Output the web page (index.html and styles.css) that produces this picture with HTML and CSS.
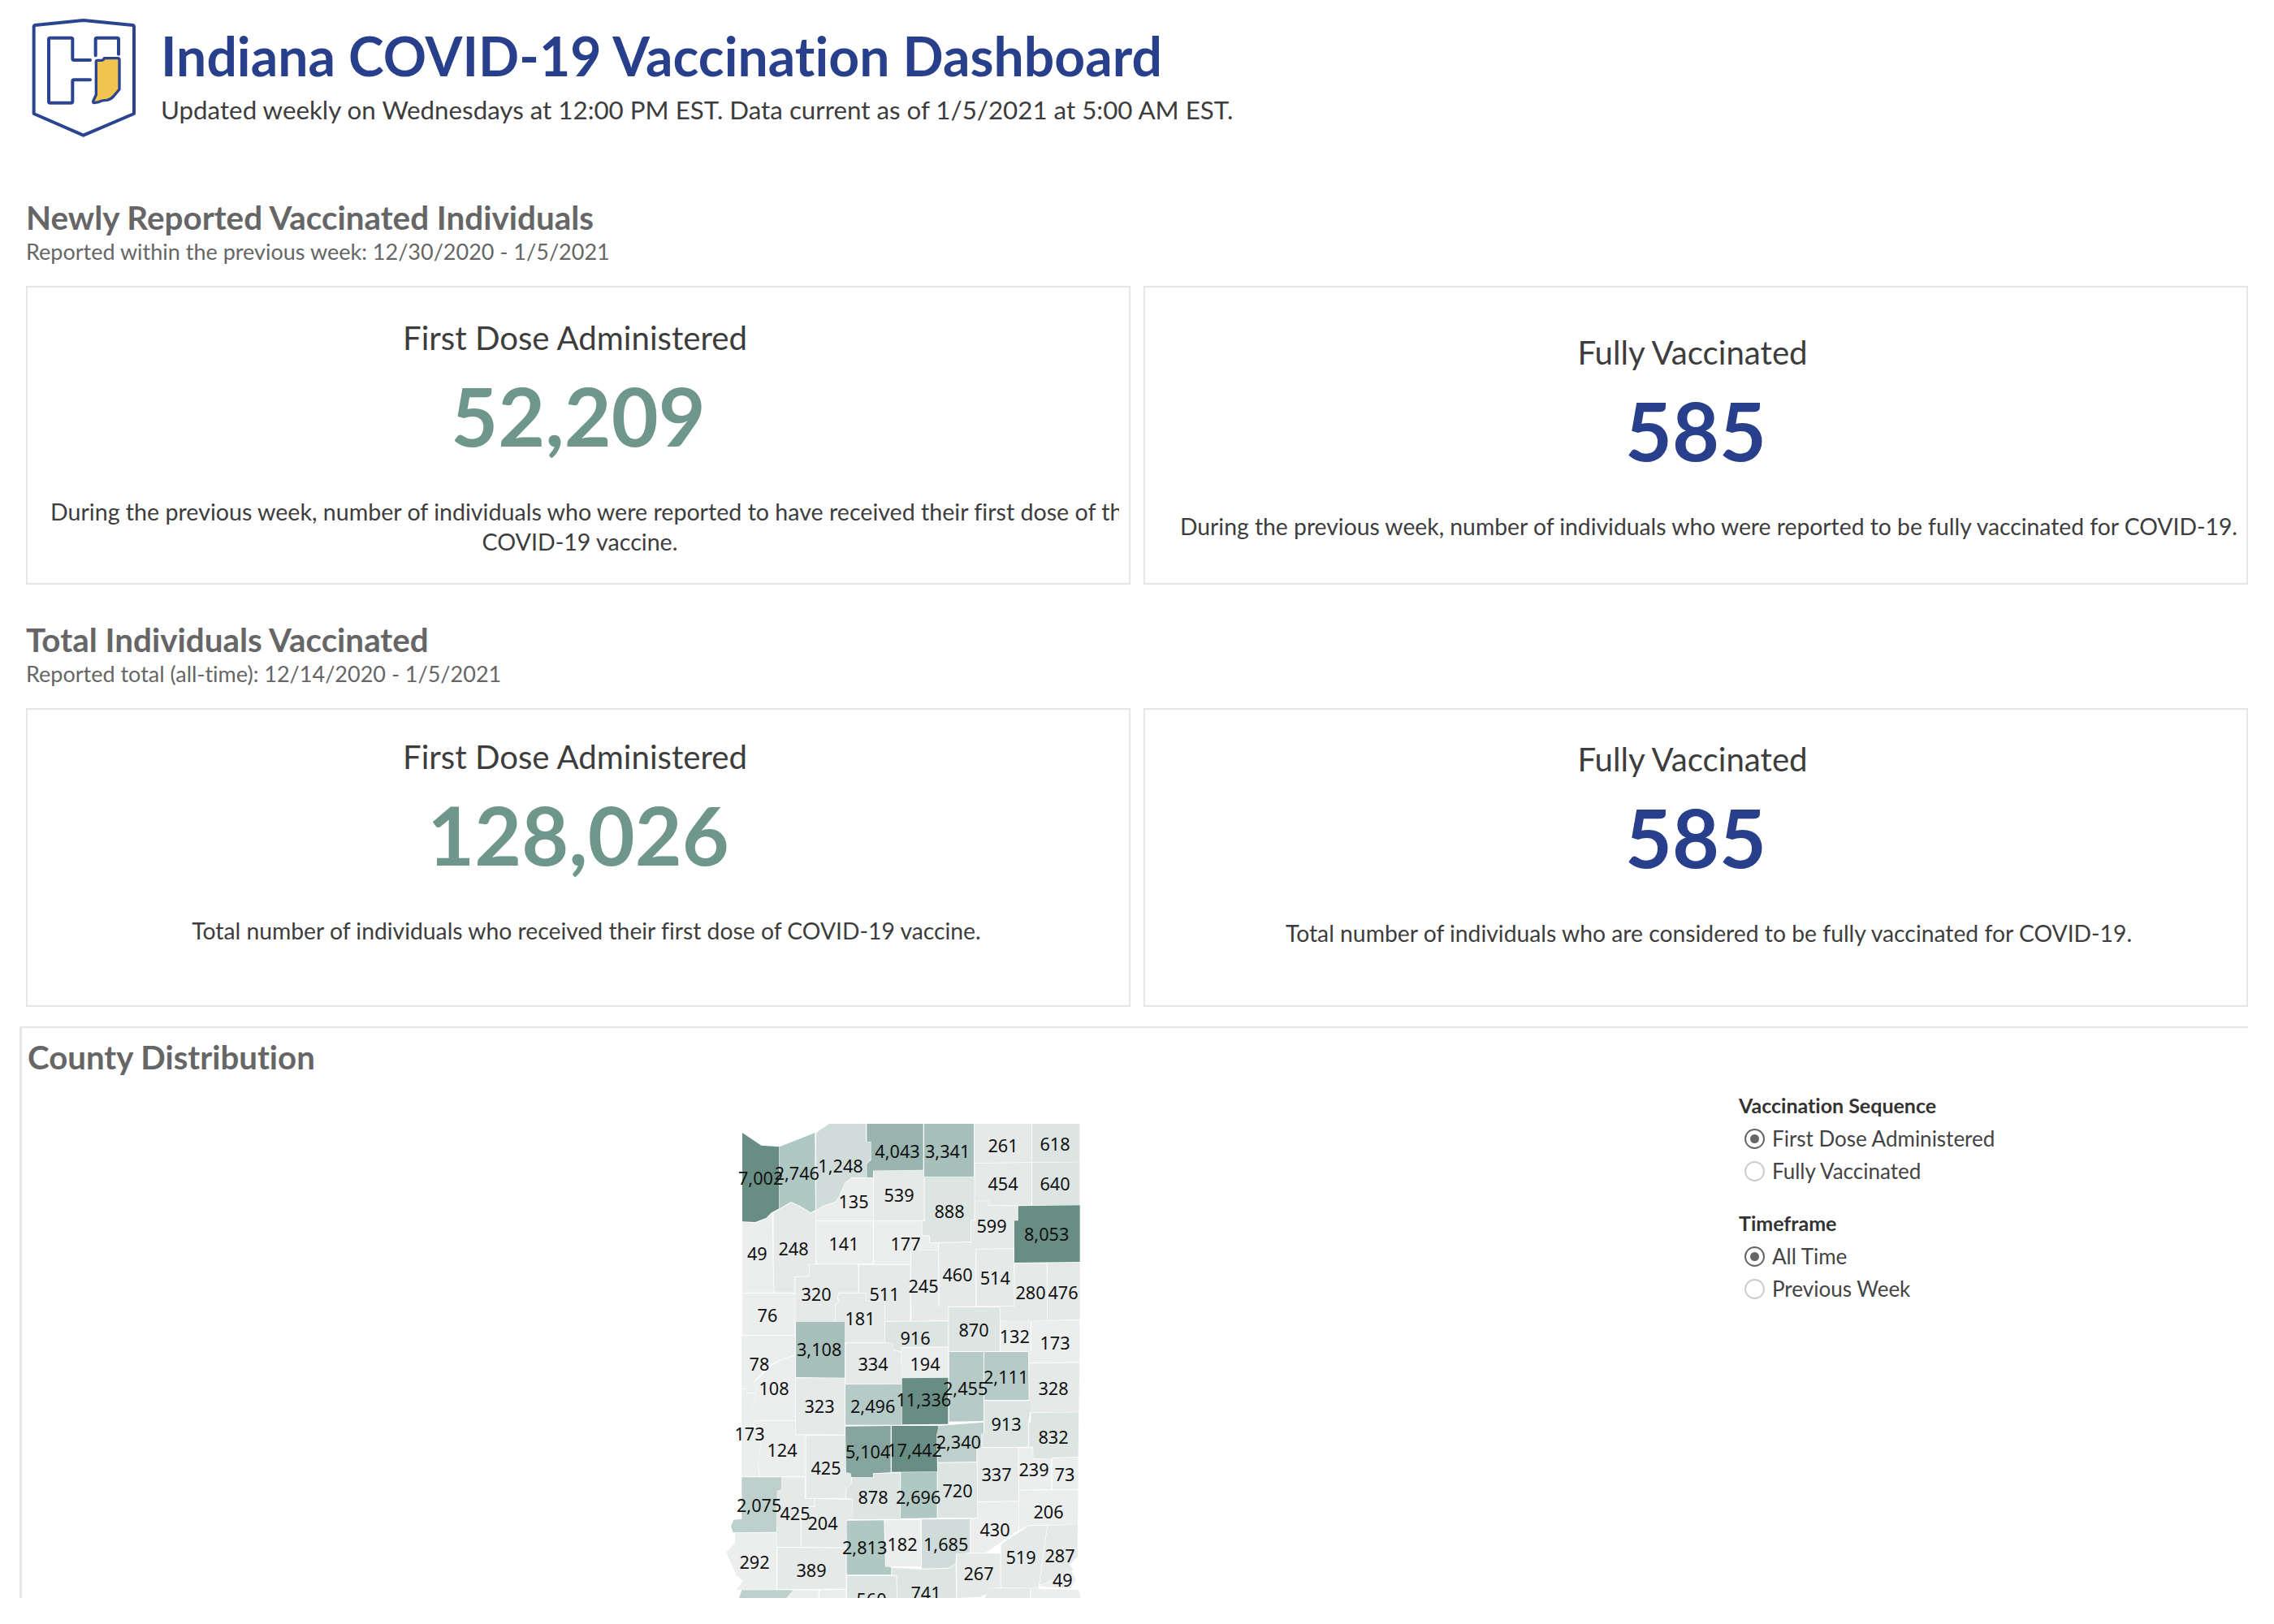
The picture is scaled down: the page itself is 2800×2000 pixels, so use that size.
FILE: index.html
```html
<!DOCTYPE html>
<html lang="en">
<head>
<meta charset="utf-8">
<title>Indiana COVID-19 Vaccination Dashboard</title>
<link rel="stylesheet" href="styles.css">
</head>
<body>
<header class="page-header">
  <svg class="logo" viewBox="0 0 450 480" aria-hidden="true">
    <path class="logo-line" d="M40 48 218 30 400 48Q405 49 405 55V375L218 455 35 375V55Q35 49 40 48Z"/>
    <path class="logo-line" d="M243 177H183Q178 177 178 172V100Q178 95 172 95H95Q90 95 90 100V330Q90 335 95 335H172Q178 335 178 330V255Q178 250 183 250H243"/>
    <path class="logo-line" d="M263 160V100Q263 95 268 95H343Q348 95 348 100V155"/>
    <path class="logo-state" d="M265 182Q265 178 270 178H285Q292 178 295 170H345Q351 170 351 176V285L330 310Q320 322 305 325Q285 325 275 332L258 335Q252 335 255 326L265 305Z"/>
  </svg>
  <div class="header-text">
    <h1 class="title">Indiana COVID-19 Vaccination Dashboard</h1>
    <p class="updated">Updated weekly on Wednesdays at 12:00 PM EST. Data current as of 1/5/2021 at 5:00 AM EST.</p>
  </div>
</header>

<section class="kpi-section first">
  <h2 class="section-title">Newly Reported Vaccinated Individuals</h2>
  <p class="section-sub">Reported within the previous week: 12/30/2020 - 1/5/2021</p>
  <div class="cards">
    <article class="card">
      <h3 class="card-title">First Dose Administered</h3>
      <div class="num green">52,209</div>
      <div class="desc desc-clip">During the previous week, number of individuals who were reported to have received their first dose of the<br>COVID-19 vaccine.</div>
    </article>
    <article class="card">
      <h3 class="card-title">Fully Vaccinated</h3>
      <div class="num blue">585</div>
      <div class="desc desc-right">During the previous week, number of individuals who were reported to be fully vaccinated for COVID-19.</div>
    </article>
  </div>
</section>

<section class="kpi-section second">
  <h2 class="section-title">Total Individuals Vaccinated</h2>
  <p class="section-sub">Reported total (all-time): 12/14/2020 - 1/5/2021</p>
  <div class="cards">
    <article class="card raised">
      <h3 class="card-title">First Dose Administered</h3>
      <div class="num green">128,026</div>
      <div class="desc desc-shift">Total number of individuals who received their first dose of COVID-19 vaccine.</div>
    </article>
    <article class="card raised-less">
      <h3 class="card-title">Fully Vaccinated</h3>
      <div class="num blue">585</div>
      <div class="desc desc-right">Total number of individuals who are considered to be fully vaccinated for COVID-19.</div>
    </article>
  </div>
</section>

<section class="county">
  <h2 class="county-title">County Distribution</h2>
  <div class="county-body">
    <svg class="map" viewBox="0 0 1560 1824" aria-label="Indiana county map">
      <g class="counties">
        <polygon class="s1" points="162,105 232,152 298,157 298,385 270,400 250,420 210,435 162,433"/>
        <polygon class="s5" points="300,157 430,105 432,390 415,400 375,375 342,360 300,385"/>
        <polygon class="s8" points="435,105 483,72 618,72 618,138 637,140 637,200 620,220 620,270 565,270 540,290 520,340 505,360 460,375 435,390"/>
        <polygon class="s3" points="622,72 830,72 830,242 645,245 645,270 622,270 622,220 638,205 638,138 622,138"/>
        <polygon class="s4" points="834,72 1017,72 1017,268 834,268"/>
        <polygon class="s10" points="1020,72 1230,72 1230,214 1020,216"/>
        <polygon class="s9" points="1233,72 1408,72 1408,212 1233,214"/>
        <polygon class="s10" points="1021,218 1230,216 1230,373 1074,373 1074,356 1021,356"/>
        <polygon class="s9" points="1233,216 1408,214 1408,372 1233,373"/>
        <polygon class="s11" points="435,393 460,378 505,362 522,342 540,293 565,272 645,272 645,430 435,430"/>
        <polygon class="s10" points="648,245 833,243 833,430 648,430"/>
        <polygon class="s9" points="836,270 1019,270 1019,425 1005,428 1005,507 855,510 855,485 827,483 827,432 836,432"/>
        <polygon class="s10" points="1022,358 1072,358 1072,375 1178,376 1178,428 1166,428 1166,532 1007,534 1007,430 1022,428"/>
        <polygon class="s1" points="1181,376 1409,373 1409,582 1167,585 1167,430 1181,430"/>
        <polygon class="s11" points="162,436 210,438 250,424 272,405 275,590 278,695 162,695"/>
        <polygon class="s10" points="278,400 300,388 342,363 375,378 415,403 432,395 432,590 408,590 408,634 355,636 355,695 280,695 278,590"/>
        <polygon class="s11" points="435,433 645,433 645,589 435,589"/>
        <polygon class="s11" points="648,433 825,433 825,486 853,488 853,512 885,512 885,537 810,539 783,540 783,590 648,590"/>
        <polygon class="s10" points="410,592 590,592 590,695 518,695 512,715 518,730 505,740 505,802 358,802 358,638 410,636"/>
        <polygon class="s10" points="594,593 782,593 782,800 690,800 690,725 620,725 620,697 594,695"/>
        <polygon class="s10" points="785,541 885,539 887,748 922,748 922,798 787,800"/>
        <polygon class="s10" points="888,512 1003,510 1024,536 1024,746 890,747"/>
        <polygon class="s10" points="1027,536 1164,535 1166,745 1028,746"/>
        <polygon class="s10" points="1168,588 1286,587 1288,797 1228,800 1115,800 1115,748 1168,747"/>
        <polygon class="s10" points="1289,586 1409,584 1409,795 1290,797"/>
        <polygon class="s11" points="162,698 356,698 356,852 162,852"/>
        <polygon class="s10" points="520,698 618,698 618,727 688,727 688,880 540,880 540,802 507,802 507,742 520,730 515,715"/>
        <polygon class="s9" points="925,750 1113,750 1113,912 925,912"/>
        <polygon class="s9" points="690,803 922,802 922,895 750,897 748,913 720,905 718,882 690,880"/>
        <polygon class="s11" points="1116,802 1227,800 1227,912 1116,912"/>
        <polygon class="s11" points="1230,800 1408,797 1408,952 1221,955 1221,913 1230,912"/>
        <polygon class="s11" points="160,855 357,855 357,925 300,945 270,960 210,1020 200,1030 215,1050 210,1065 175,1065 175,1050 160,1050"/>
        <polygon class="s11" points="357,928 357,1168 207,1168 200,1125 212,1065 217,1050 202,1030 212,1022 272,963 300,948"/>
        <polygon class="s4" points="360,803 540,803 540,1010 360,1008"/>
        <polygon class="s10" points="543,883 718,883 720,908 748,916 750,1032 543,1033"/>
        <polygon class="s11" points="750,900 922,898 922,1009 750,1012"/>
        <polygon class="s6" points="926,915 1053,915 1053,1170 926,1172"/>
        <polygon class="s6" points="1056,915 1218,915 1220,1092 1056,1092"/>
        <polygon class="s10" points="1222,958 1408,955 1405,1136 1222,1138"/>
        <polygon class="s1" points="752,1012 922,1010 922,1181 752,1183"/>
        <polygon class="s6" points="543,1035 750,1034 750,1184 543,1184"/>
        <polygon class="s10" points="360,1012 540,1012 540,1220 360,1219"/>
        <polygon class="s9" points="1056,1096 1225,1096 1225,1138 1218,1175 1218,1265 1048,1267 1048,1218 1056,1215"/>
        <polygon class="s9" points="1228,1140 1405,1138 1403,1302 1305,1305 1305,1310 1237,1308 1237,1265 1221,1265 1221,1175 1228,1175"/>
        <polygon class="s11" points="160,1052 175,1052 175,1067 210,1067 200,1125 207,1170 200,1185 230,1230 225,1305 220,1345 225,1375 160,1375"/>
        <polygon class="s11" points="207,1170 358,1170 358,1222 395,1222 395,1375 228,1375 222,1345 232,1230 205,1185"/>
        <polygon class="s10" points="398,1225 543,1223 545,1360 565,1363 563,1400 545,1425 543,1455 398,1455"/>
        <polygon class="s2" points="543,1190 710,1188 710,1360 645,1363 645,1378 565,1378 563,1363 546,1360"/>
        <polygon class="s1" points="714,1188 887,1188 880,1222 882,1357 714,1358"/>
        <polygon class="s7" points="888,1188 1053,1175 1053,1215 1045,1218 1045,1270 1027,1272 1027,1320 885,1322 880,1222"/>
        <polygon class="s10" points="1030,1270 1180,1268 1182,1465 1032,1467"/>
        <polygon class="s11" points="1183,1270 1235,1270 1235,1310 1303,1312 1303,1422 1184,1424"/>
        <polygon class="s11" points="1307,1307 1403,1304 1403,1423 1307,1423"/>
        <polygon class="s9" points="884,1325 1028,1323 1030,1528 884,1528"/>
        <polygon class="s5" points="748,1360 881,1358 881,1528 747,1530"/>
        <polygon class="s9" points="648,1365 745,1362 745,1532 570,1533 570,1457 546,1455 547,1425 565,1400 568,1380 648,1380"/>
        <polygon class="s10" points="310,1378 393,1378 393,1457 427,1457 427,1485 377,1490 377,1635 290,1635 290,1425 308,1425"/>
        <polygon class="s10" points="430,1458 568,1460 570,1532 547,1535 546,1637 380,1635 380,1490 430,1487"/>
        <polygon class="s7" points="160,1378 307,1378 307,1423 290,1427 288,1580 128,1582 120,1560 130,1535 160,1532"/>
        <polygon class="s11" points="135,1585 288,1583 288,1793 140,1793 165,1760 140,1740 103,1655 135,1620"/>
        <polygon class="s10" points="292,1638 545,1640 545,1790 292,1792"/>
        <polygon class="s5" points="548,1538 685,1537 690,1708 712,1710 712,1738 548,1738"/>
        <polygon class="s11" points="688,1537 820,1535 822,1707 692,1708"/>
        <polygon class="s8" points="824,1534 1003,1532 1003,1657 952,1660 950,1695 925,1712 825,1715"/>
        <polygon class="s11" points="1032,1470 1182,1468 1182,1575 1060,1657 1006,1657 1006,1532 1032,1530"/>
        <polygon class="s11" points="1185,1427 1403,1425 1401,1553 1220,1555 1185,1575"/>
        <polygon class="s10" points="1118,1625 1220,1558 1288,1556 1258,1770 1255,1786 1118,1786"/>
        <polygon class="s10" points="955,1660 1115,1660 1115,1785 1072,1787 1072,1805 1040,1820 955,1824"/>
        <polygon class="s10" points="1290,1556 1401,1554 1400,1672 1370,1700 1385,1720 1340,1745 1300,1755 1285,1770 1260,1773"/>
        <polygon class="s11" points="1262,1775 1290,1770 1305,1750 1340,1750 1375,1720 1395,1755 1375,1790 1260,1780"/>
        <polygon class="s9" points="715,1712 822,1718 925,1715 950,1698 952,1824 735,1824 733,1740 715,1738"/>
        <polygon class="s9" points="549,1742 730,1742 733,1824 549,1824"/>
        <polygon class="s7" points="160,1795 350,1795 325,1824 150,1824"/>
        <polygon class="s11" points="350,1795 443,1795 443,1824 327,1824"/>
        <polygon class="s11" points="447,1795 545,1793 545,1824 447,1824"/>
        <polygon class="s10" points="1058,1824 1075,1788 1225,1787 1225,1824"/>
        <polygon class="s11" points="1228,1780 1255,1778 1258,1790 1340,1792 1405,1795 1412,1824 1228,1824"/>
      </g>
      <g class="labels">
        <text x="230" y="292">7,002</text><text x="364" y="274">2,746</text><text x="525" y="248">1,248</text><text x="735" y="195">4,043</text><text x="920" y="195">3,341</text><text x="1125" y="172">261</text><text x="1317" y="166">618</text><text x="1125" y="314">454</text><text x="1317" y="314">640</text>
        <text x="573" y="381">135</text><text x="741" y="357">539</text><text x="927" y="417">888</text><text x="1083" y="471">599</text><text x="1286" y="501">8,053</text>
        <text x="217" y="573">49</text><text x="351" y="555">248</text><text x="537" y="537">141</text><text x="765" y="537">177</text><text x="957" y="651">460</text><text x="1096" y="663">514</text><text x="831" y="693">245</text><text x="435" y="723">320</text><text x="687" y="723">511</text><text x="1227" y="717">280</text><text x="1347" y="717">476</text>
        <text x="255" y="801">76</text><text x="597" y="813">181</text><text x="1017" y="855">870</text><text x="801" y="885">916</text><text x="1168" y="879">132</text><text x="1317" y="903">173</text><text x="446" y="927">3,108</text><text x="645" y="981">334</text><text x="837" y="981">194</text><text x="225" y="981">78</text>
        <text x="1136" y="1029">2,111</text><text x="279" y="1071">108</text><text x="986" y="1071">2,455</text><text x="1311" y="1071">328</text><text x="832" y="1113">11,336</text><text x="447" y="1137">323</text><text x="644" y="1137">2,496</text><text x="1137" y="1203">913</text>
        <text x="189" y="1239">173</text><text x="961" y="1269">2,340</text><text x="1311" y="1251">832</text><text x="309" y="1299">124</text><text x="626" y="1305">5,104</text><text x="798" y="1299">17,442</text><text x="471" y="1365">425</text><text x="1101" y="1389">337</text><text x="1239" y="1371">239</text><text x="1353" y="1389">73</text>
        <text x="957" y="1449">720</text><text x="645" y="1473">878</text><text x="812" y="1473">2,696</text><text x="224" y="1503">2,075</text><text x="357" y="1533">425</text><text x="459" y="1567">204</text><text x="1293" y="1527">206</text><text x="1095" y="1593">430</text>
        <text x="614" y="1659">2,813</text><text x="753" y="1647">182</text><text x="914" y="1647">1,685</text><text x="1191" y="1695">519</text><text x="1335" y="1689">287</text><text x="207" y="1713">292</text><text x="417" y="1743">389</text><text x="1035" y="1755">267</text><text x="1345" y="1779">49</text><text x="840" y="1827">741</text><text x="639" y="1851">560</text>
      </g>
    </svg>
    <aside class="filters">
      <fieldset class="filter">
        <legend class="filter-name">Vaccination Sequence</legend>
        <div class="option"><span class="radio on"></span>First Dose Administered</div>
        <div class="option"><span class="radio"></span>Fully Vaccinated</div>
      </fieldset>
      <fieldset class="filter">
        <legend class="filter-name">Timeframe</legend>
        <div class="option"><span class="radio on"></span>All Time</div>
        <div class="option"><span class="radio"></span>Previous Week</div>
      </fieldset>
    </aside>
  </div>
</section>
</body>
</html>
```

FILE: styles.css
```css
* { box-sizing: border-box; }
html, body { margin: 0; padding: 0; background: #fff; }
body { width: 2800px; height: 2000px; overflow: hidden; font-family: "Lato", "Noto Sans", sans-serif; font-variant-ligatures: none; color: #333; }
h1, h2, h3, p { margin: 0; font-weight: normal; }

.page-header { display: flex; align-items: flex-start; height: 243px; padding: 15px 0 0 30px; gap: 18px; }
.logo { width: 150px; height: 160px; flex: none; }
.logo-line { fill: none; stroke: #2a4490; stroke-width: 12; stroke-linejoin: round; stroke-linecap: round; }
.logo-state { fill: #f1c44f; stroke: #2a4490; stroke-width: 10; stroke-linejoin: round; }
.header-text { display: flex; flex-direction: column; padding-top: 15px; }
.title { font-size: 66px; line-height: 78px; font-weight: 700; color: #283f8c; letter-spacing: 0.04px; }
.updated { font-size: 31.3px; line-height: 36px; margin-top: 9px; color: #3d3d3d; }

.kpi-section { padding: 0 32px; }
.section-title { font-size: 40.4px; line-height: 50px; font-weight: 700; color: #666; }
.section-sub { font-size: 27px; line-height: 34px; color: #666; }
.cards { display: grid; grid-template-columns: 1360px 1360px; gap: 16px; margin-top: 25px; }
.card { height: 368px; padding-top: 7px; border: 2px solid #e6e6e6; display: flex; flex-direction: column; align-items: center; justify-content: center; }
.card.raised { padding-bottom: 45px; }
.card.raised-less { padding-bottom: 39px; }
.card-title { font-size: 40.2px; line-height: 46px; margin-left: -8px; color: #3d3d3d; }
.num { font-size: 100px; line-height: 112px; font-weight: 700; margin-top: 16px; }
.green { color: #6e968b; }
.blue { color: #283f8c; }
.desc { font-size: 28.3px; line-height: 37.5px; margin-top: 45px; text-align: center; color: #3d3d3d; }
.desc-clip { font-size: 28.6px; align-self: stretch; margin-left: 28px; margin-right: 12px; padding-right: 12px; overflow: hidden; white-space: nowrap; }
.desc-right { margin-left: 32px; white-space: nowrap; }
.desc-shift { margin-left: 20px; white-space: nowrap; }
.second { margin-top: 43px; }

.county { margin: 24px 32px 0 24px; height: 704px; overflow: hidden; border-top: 2px solid #e6e6e6; border-left: 3px solid #e6e6e6; }
.county-title { font-size: 40.2px; line-height: 46px; font-weight: 700; color: #666; padding: 13px 0 0 7px; box-sizing: content-box; }
.county-body { display: flex; align-items: flex-start; padding: 35px 0 0 833px; }
.map { width: 520px; height: 608px; flex: none; }
.counties polygon { stroke: none; }
.labels { transform: translateY(4px); }
.labels text { font-family: "Noto Sans", sans-serif; font-size: 65px; fill: #111; text-anchor: middle; }
.s1 { fill: #688d84; } .s2 { fill: #86a59e; } .s3 { fill: #9ab5af; } .s4 { fill: #a7c0bb; }
.s5 { fill: #b0c8c3; } .s6 { fill: #b6cbc7; } .s7 { fill: #bdd0cc; } .s8 { fill: #d0dcd9; }
.s9 { fill: #dde5e3; } .s10 { fill: #e5e9e8; } .s11 { fill: #ebeeed; }

.filters { margin-left: 761px; display: flex; flex-direction: column; gap: 27px; margin-top: -16px; }
.filter { border: 0; margin: 0; padding: 0; display: flex; flex-direction: column; }
.filter-name { padding: 0; font-size: 25px; line-height: 34px; font-weight: 700; color: #333; margin-bottom: 4px; }
.option { display: flex; align-items: center; height: 40px; font-size: 26px; color: #444; padding-left: 7px; gap: 9px; }
.radio { width: 25px; height: 25px; border: 2px solid #ccc; border-radius: 50%; flex: none; display: flex; align-items: center; justify-content: center; }
.radio.on { border-color: #666; }
.radio.on::after { content: ""; width: 11px; height: 11px; border-radius: 50%; background: #666; }
```
